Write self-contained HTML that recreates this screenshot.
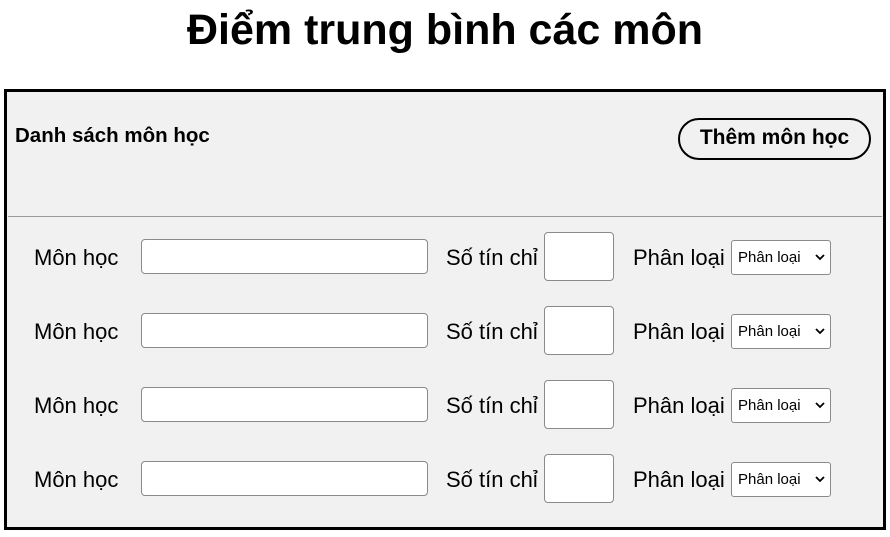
<!DOCTYPE html>
<html><head><meta charset="utf-8"><style>
body{margin:0;width:890px;height:537px;background:#fff;font-family:"Liberation Sans",sans-serif;position:relative;overflow:hidden;color:#000}
h1{position:absolute;top:2px;left:0;width:890px;margin:0;text-align:center;font-size:43px;line-height:56px;font-weight:bold}
.box{position:absolute;left:4px;top:89px;width:876px;height:435px;border:3px solid #000;background:#f1f1f1}
.a{position:absolute}
.hd{left:8px;top:32px;font-weight:bold;font-size:20.5px}
.btn{left:671px;top:26px;width:189px;height:38px;border:2px solid #000;border-radius:21px;font-weight:bold;font-size:21px;text-align:center;line-height:36px}
.hr{left:1px;top:124px;width:874px;height:1px;background:#999}
.lbl{font-size:22px;line-height:26px}
.in{background:#fff;border:1px solid #8a8a8a;border-radius:4px;box-sizing:border-box}
.sel{background:#fff;border:1px solid #8a8a8a;border-radius:3px;box-sizing:border-box;font-size:15px;line-height:33px;padding-left:6px}
.sel svg{position:absolute;right:5px;top:13px}
</style></head><body>
<h1>Điểm trung bình các môn</h1>
<div class="box">
<div class="a hd">Danh sách môn học</div>
<div class="a btn">Thêm môn học</div>
<div class="a hr"></div>
</div>
<div id="rows"></div>
<script>
var h='';[257,331,405,479].forEach(function(c){
h+='<div class="a lbl" style="left:34px;top:'+(c-12)+'px">Môn học</div>';
h+='<div class="a in" style="left:141px;top:'+(c-18)+'px;width:287px;height:35px"></div>';
h+='<div class="a lbl" style="left:446px;top:'+(c-12)+'px">Số tín chỉ</div>';
h+='<div class="a in" style="left:544px;top:'+(c-25)+'px;width:70px;height:49px"></div>';
h+='<div class="a lbl" style="left:633px;top:'+(c-12)+'px">Phân loại</div>';
h+='<div class="a sel" style="left:731px;top:'+(c-17)+'px;width:100px;height:35px">Phân loại<svg width="10" height="7" viewBox="0 0 10 7"><path d="M1 1l4 4 4-4" stroke="#000" stroke-width="1.8" fill="none"/></svg></div>';
});document.getElementById('rows').innerHTML=h;
</script>
</body></html>
